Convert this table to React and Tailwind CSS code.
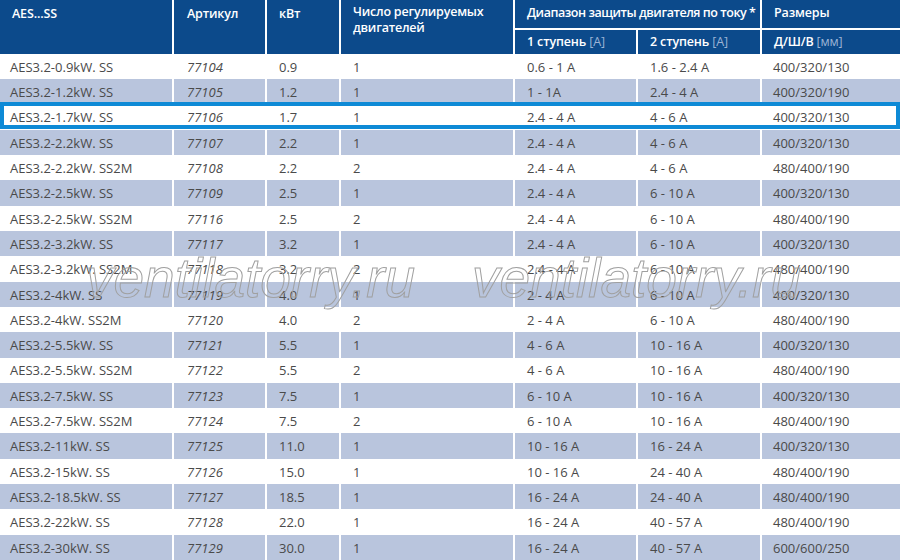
import React from 'react';

const rows = [
  ['AES3.2-0.9kW. SS', '77104', '0.9', '1', '0.6 - 1 A', '1.6 - 2.4 A', '400/320/130'],
  ['AES3.2-1.2kW. SS', '77105', '1.2', '1', '1 - 1A', '2.4 - 4 A', '400/320/190'],
  ['AES3.2-1.7kW. SS', '77106', '1.7', '1', '2.4 - 4 A', '4 - 6 A', '400/320/130'],
  ['AES3.2-2.2kW. SS', '77107', '2.2', '1', '2.4 - 4 A', '4 - 6 A', '400/320/130'],
  ['AES3.2-2.2kW. SS2M', '77108', '2.2', '2', '2.4 - 4 A', '4 - 6 A', '480/400/190'],
  ['AES3.2-2.5kW. SS', '77109', '2.5', '1', '2.4 - 4 A', '6 - 10 A', '400/320/130'],
  ['AES3.2-2.5kW. SS2M', '77116', '2.5', '2', '2.4 - 4 A', '6 - 10 A', '480/400/190'],
  ['AES3.2-3.2kW. SS', '77117', '3.2', '1', '2.4 - 4 A', '6 - 10 A', '400/320/130'],
  ['AES3.2-3.2kW. SS2M', '77118', '3.2', '2', '2.4 - 4 A', '6 - 10 A', '480/400/190'],
  ['AES3.2-4kW. SS', '77119', '4.0', '1', '2 - 4 A', '6 - 10 A', '400/320/130'],
  ['AES3.2-4kW. SS2M', '77120', '4.0', '2', '2 - 4 A', '6 - 10 A', '480/400/190'],
  ['AES3.2-5.5kW. SS', '77121', '5.5', '1', '4 - 6 A', '10 - 16 A', '400/320/130'],
  ['AES3.2-5.5kW. SS2M', '77122', '5.5', '2', '4 - 6 A', '10 - 16 A', '480/400/190'],
  ['AES3.2-7.5kW. SS', '77123', '7.5', '1', '6 - 10 A', '10 - 16 A', '400/320/130'],
  ['AES3.2-7.5kW. SS2M', '77124', '7.5', '2', '6 - 10 A', '10 - 16 A', '480/400/190'],
  ['AES3.2-11kW. SS', '77125', '11.0', '1', '10 - 16 A', '16 - 24 A', '400/320/130'],
  ['AES3.2-15kW. SS', '77126', '15.0', '1', '10 - 16 A', '24 - 40 A', '480/400/190'],
  ['AES3.2-18.5kW. SS', '77127', '18.5', '1', '16 - 24 A', '24 - 40 A', '480/400/190'],
  ['AES3.2-22kW. SS', '77128', '22.0', '1', '16 - 24 A', '40 - 57 A', '480/400/190'],
  ['AES3.2-30kW. SS', '77129', '30.0', '1', '16 - 24 A', '40 - 57 A', '600/600/250'],
];

// column widths measured off the screenshot, 2px white gutters between
const cols = 'grid grid-cols-[172px_91px_72px_172px_121px_122px_138px] gap-x-[2px]';

const Watermark = ({ className }) => (
  <div
    className={`absolute pointer-events-none select-none italic text-[55px] leading-none text-transparent [-webkit-text-stroke:1px_#a0a0a0] ${className}`}
    style={{ fontFamily: '"Liberation Sans", Arial, sans-serif' }}
  >
    ventilatorry.ru
  </div>
);

const HeadCell = ({ children, className = '' }) => (
  <div
    className={`bg-[#0c4a8b] text-white font-semibold text-[12.5px] leading-[16px] whitespace-nowrap pl-[12px] ${className}`}
  >
    {children}
  </div>
);

const Unit = ({ children }) => <span className="font-normal text-[#9db4d6]">{children}</span>;

export default function App() {
  return (
    <div
      className="relative w-[900px] h-[560px] overflow-hidden bg-white"
      style={{ fontFamily: '"Open Sans", "Noto Sans", sans-serif' }}
    >
      {/* Header */}
      <div className={`${cols} grid-rows-[28px_24px] gap-y-[2px] bg-white`}>
        <HeadCell className="row-span-2 pl-[10px] pt-[6px] tracking-[-0.15px]">AES...SS</HeadCell>
        <HeadCell className="row-span-2 pl-[13px] pt-[6px] tracking-[-0.15px]">Артикул</HeadCell>
        <HeadCell className="row-span-2 pt-[6px] tracking-[-0.15px]">кВт</HeadCell>
        <HeadCell className="row-span-2 pt-[4px] tracking-[-0.2px]">
          Число регулируемых
          <br />
          двигателей
        </HeadCell>
        <HeadCell className="col-span-2 pt-[5px] tracking-[-0.45px]">
          Диапазон защиты двигателя по току *
        </HeadCell>
        <HeadCell className="pt-[5px] pl-[11px] tracking-[-0.15px]">Размеры</HeadCell>
        <HeadCell className="flex items-center tracking-[-0.15px]">
          <span>
            1 ступень <Unit>[A]</Unit>
          </span>
        </HeadCell>
        <HeadCell className="flex items-center tracking-[-0.15px]">
          <span>
            2 ступень <Unit>[A]</Unit>
          </span>
        </HeadCell>
        <HeadCell className="flex items-center pl-[11px] tracking-[-0.15px]">
          <span>
            Д/Ш/В <Unit>[мм]</Unit>
          </span>
        </HeadCell>
      </div>

      {/* Body */}
      <div className="bg-white">
        {rows.map((r, i) => {
          const bg = i % 2 === 1 ? 'bg-[#b9c5dd]' : 'bg-white';
          return (
            <div key={r[1]} className={`${cols} relative h-[25.3px] text-[13px] text-[#4a4a4a]`}>
              <div className={`${bg} flex items-center pl-[10px] pt-[2px]`}>{r[0]}</div>
              <div className={`${bg} flex items-center pl-[13px] pt-[2px] italic`}>{r[1]}</div>
              <div className={`${bg} flex items-center pl-[12px] pt-[2px]`}>{r[2]}</div>
              <div className={`${bg} flex items-center pl-[12px] pt-[2px]`}>{r[3]}</div>
              <div className={`${bg} flex items-center pl-[12px] pt-[2px]`}>{r[4]}</div>
              <div className={`${bg} flex items-center pl-[12px] pt-[2px]`}>{r[5]}</div>
              <div className={`${bg} flex items-center pl-[11px] pt-[2px]`}>{r[6]}</div>
              {i === 2 && (
                <div className="absolute left-0 right-0 -top-[3px] h-[27px] border-[4px] border-[#0e8ad6] pointer-events-none" />
              )}
            </div>
          );
        })}
      </div>

      <Watermark className="left-[86px] top-[251px]" />
      <Watermark className="left-[472px] top-[251px]" />
    </div>
  );
}
